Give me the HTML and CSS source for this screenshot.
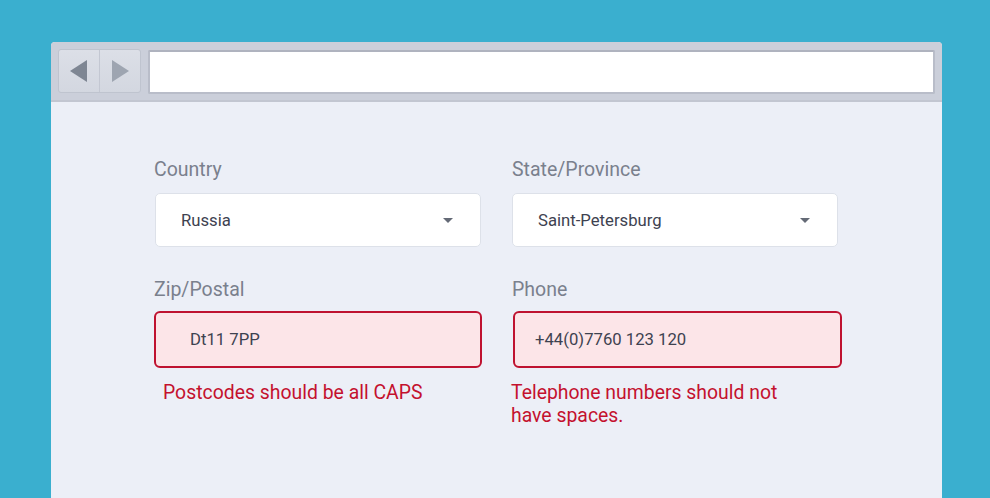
FILE: index.html
```html
<!DOCTYPE html>
<html>
<head>
<meta charset="utf-8">
<link rel="stylesheet" href="styles.css">
</head>
<body>
<div class="window">
  <div class="toolbar">
    <div class="nav">
      <div class="navbtn"><svg width="18" height="22" viewBox="0 0 18 22"><path d="M17 0 L0 11 L17 22 Z" fill="#7E8693"/></svg></div>
      <div class="navbtn"><svg width="17" height="22" viewBox="0 0 17 22"><path d="M0 0 L17 11 L0 22 Z" fill="#9EA5B1"/></svg></div>
    </div>
    <div class="address"></div>
  </div>
  <div class="content">
    <div class="form">
      <div class="field">
        <div class="label">Country</div>
        <div class="select"><span class="value">Russia</span><span class="caret"></span></div>
      </div>
      <div class="field">
        <div class="label">State/Province</div>
        <div class="select select-b"><span class="value">Saint-Petersburg</span><span class="caret"></span></div>
      </div>
      <div class="field">
        <div class="label">Zip/Postal</div>
        <div class="input error zip"><span class="value">Dt11 7PP</span></div>
        <div class="msg zip-msg">Postcodes should be all CAPS</div>
      </div>
      <div class="field">
        <div class="label">Phone</div>
        <div class="input error phone"><span class="value">+44(0)7760 123 120</span></div>
        <div class="msg phone-msg">Telephone numbers should not<br>have spaces.</div>
      </div>
    </div>
  </div>
</div>
</body>
</html>
```
FILE: styles.css
```css
* { box-sizing: border-box; }
html, body { margin: 0; padding: 0; }
body {
  width: 990px;
  height: 498px;
  overflow: hidden;
  background: #3AAFCF;
  font-family: Roboto, "Liberation Sans", sans-serif;
}
.window {
  margin: 42px 0 0 51px;
  width: 891px;
  height: 456px;
  background: #ECEFF7;
  border-radius: 4px 4px 0 0;
  overflow: hidden;
}
.toolbar {
  height: 60px;
  background: #CBCFDA;
  border-bottom: 2px solid #C2C6D1;
  display: flex;
  align-items: flex-start;
  padding: 7px 7px 0 7px;
  gap: 7px;
}
.nav {
  display: flex;
  width: 83px;
  height: 44px;
  border: 1px solid #BFC4CF;
  border-radius: 3px;
  background: linear-gradient(#DCDFE7, #D3D7E0);
}
.navbtn {
  flex: 1;
  display: flex;
  align-items: center;
  justify-content: center;
}
.navbtn + .navbtn { border-left: 1px solid #C3C7D2; }
.address {
  flex: 1;
  height: 44px;
  margin-top: 1px;
  background: #FFFFFF;
  border: 2px solid #B9BDC9;
  border-top-color: #AFB3BF;
  border-radius: 2px;
}
.content {
  padding: 56px 0 0 103px;
}
.form {
  display: grid;
  grid-template-columns: 328px 330px;
  column-gap: 30px;
  row-gap: 31px;
}
.label {
  font-size: 19.5px;
  line-height: 23px;
  color: #7A808D;
  margin-bottom: 12px;
}
.field:nth-child(3) .label, .field:nth-child(4) .label { margin-bottom: 10px; }
.select {
  height: 54px;
  margin-left: 1px;
  width: 326px;
  background: #FFFFFF;
  border: 1px solid #DDE1E9;
  border-radius: 5px;
  display: flex;
  align-items: center;
  justify-content: space-between;
  padding: 0 27px 0 25px;
}
.select-b { margin-left: 0; }
.value {
  font-size: 16.7px;
  color: #3E4250;
}
.caret {
  width: 0;
  height: 0;
  border-left: 5px solid transparent;
  border-right: 5px solid transparent;
  border-top: 5px solid #646A76;
}
.input {
  height: 57px;
  display: flex;
  align-items: center;
}
.error {
  background: #FCE5E8;
  border: 2px solid #BF1230;
  border-radius: 6px;
}
.zip { width: 328px; padding-left: 34px; }
.phone { width: 329px; margin-left: 1px; padding-left: 20px; }
.msg {
  font-size: 19.4px;
  line-height: 23px;
  color: #C4112E;
  margin-top: 13px;
}
.zip-msg { padding-left: 9px; }
.phone-msg { margin-left: -1px; }
```
